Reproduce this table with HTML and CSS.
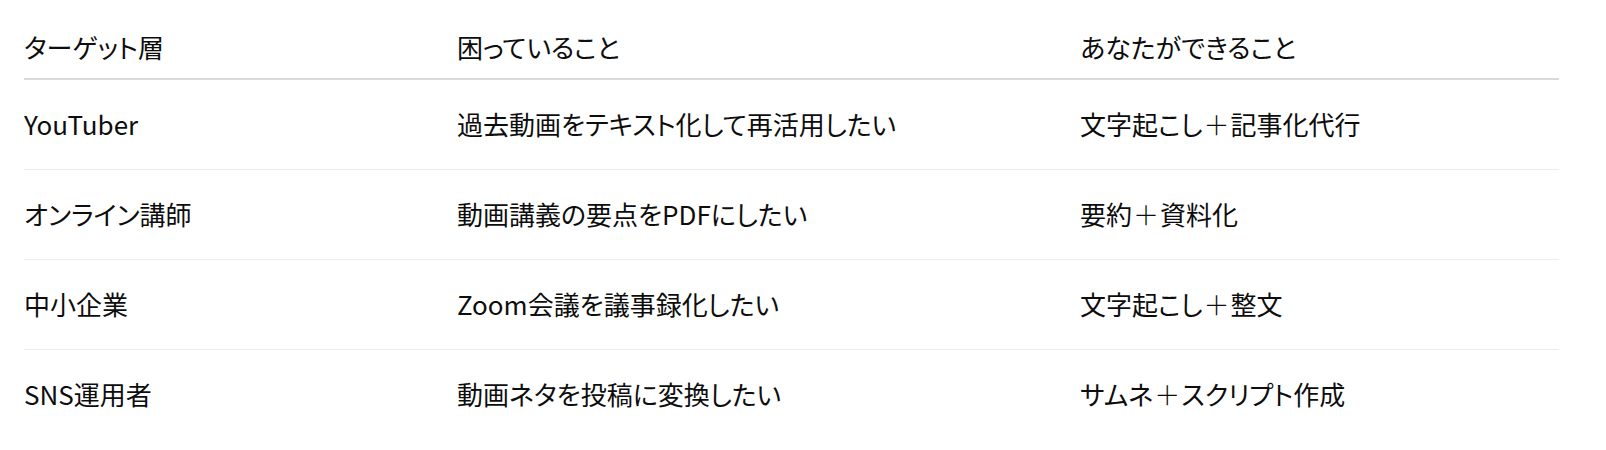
FILE: index.html
```html
<!DOCTYPE html>
<html lang="ja">
<head>
<meta charset="utf-8">
<title>ターゲット層</title>
<link rel="stylesheet" href="styles.css">
</head>
<body>
<div class="wrap">
  <table class="grid">
    <colgroup>
      <col class="c1">
      <col class="c2">
      <col class="c3">
    </colgroup>
    <thead>
      <tr>
        <th>ターゲット層</th>
        <th>困っていること</th>
        <th>あなたができること</th>
      </tr>
    </thead>
    <tbody>
      <tr>
        <td>YouTuber</td>
        <td>過去動画をテキスト化して再活用したい</td>
        <td>文字起こし<span class="plus">＋</span>記事化代行</td>
      </tr>
      <tr>
        <td>オンライン講師</td>
        <td>動画講義の要点をPDFにしたい</td>
        <td>要約<span class="plus">＋</span>資料化</td>
      </tr>
      <tr>
        <td>中小企業</td>
        <td>Zoom会議を議事録化したい</td>
        <td>文字起こし<span class="plus">＋</span>整文</td>
      </tr>
      <tr>
        <td>SNS運用者</td>
        <td>動画ネタを投稿に変換したい</td>
        <td>サムネ<span class="plus">＋</span>スクリプト作成</td>
      </tr>
    </tbody>
  </table>
</div>
</body>
</html>
```

FILE: styles.css
```css
html, body {
  margin: 0;
  padding: 0;
  background: #ffffff;
}

body {
  font-family: "Noto Sans CJK JP", "Noto Sans", sans-serif;
  font-size: 26px;
  line-height: 40px;
  color: #0d0d0d;
  font-feature-settings: "palt" 1;
}

.wrap {
  padding: 0 47px 0 24px;
}

.grid {
  width: 1535px;
  border-collapse: collapse;
  table-layout: fixed;
}

.c1 { width: 433px; }
.c2 { width: 623px; }
.c3 { width: auto; }

.grid th,
.grid td {
  text-align: left;
  font-weight: 400;
  padding: 0;
  white-space: nowrap;
}

.grid th {
  padding-top: 27px;
  padding-bottom: 11px;
  border-bottom: 2px solid #d9d9d9;
}

.grid td {
  padding-top: 24px;
  padding-bottom: 25px;
  border-bottom: 1px solid #ececec;
}

.grid tbody tr:last-child td {
  border-bottom: none;
}

.plus {
  font-feature-settings: "palt" 0;
  font-weight: 300;
  margin: 0 1px;
}
```
